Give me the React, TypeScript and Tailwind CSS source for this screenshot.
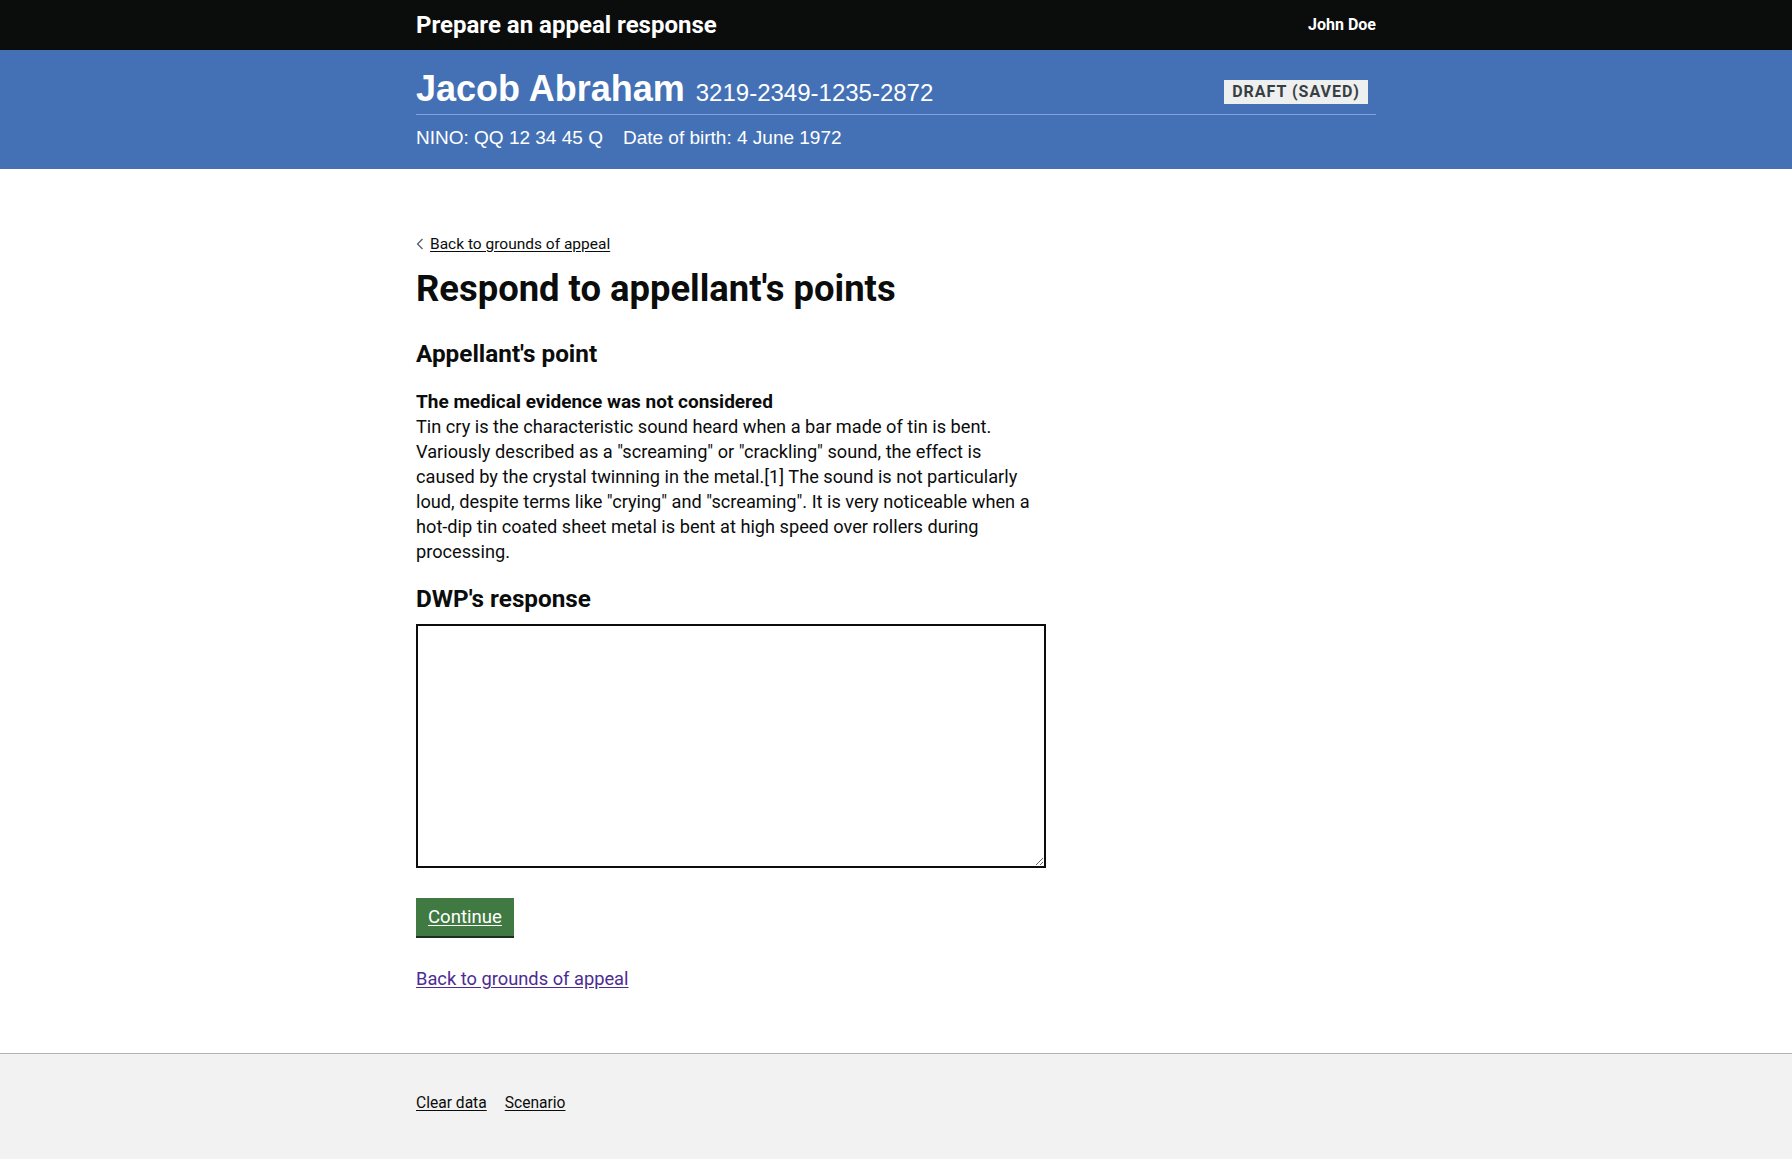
import React from "react";

const body = "font-['Roboto',sans-serif]";
const arial = "font-['Liberation_Sans',Arial,sans-serif]";

function Chevron() {
  return (
    <svg width="8" height="12" viewBox="0 0 8 12" className="shrink-0">
      <polyline points="6.5,1 1.5,6 6.5,11" fill="none" stroke="#505a5f" strokeWidth="1.2" />
    </svg>
  );
}

export default function App() {
  return (
    <div className={`min-h-screen flex flex-col bg-white text-[#0b0c0c] ${body}`}>
      {/* top bar */}
      <header className="bg-[#0b0c0c] text-white">
        <div className="w-[960px] mx-auto h-[50px] flex items-center justify-between">
          <div className="text-[24px] leading-[30px] font-bold">Prepare an appeal response</div>
          <div className="text-[16px] leading-[20px] font-bold">John Doe</div>
        </div>
      </header>

      {/* claimant band */}
      <section className={`bg-[#4471b5] text-white ${arial}`}>
        <div className="w-[960px] mx-auto pt-[18px] pb-[19px]">
          <div className="flex justify-between items-start border-b border-[#7fa1df] pb-[5px]">
            <div className="flex items-baseline gap-[11px]">
              <span className="text-[36px] leading-[41px] font-bold">Jacob Abraham</span>
              <span className="text-[24px] leading-[30px]">3219-2349-1235-2872</span>
            </div>
            <span
              className={`mt-[12px] mr-[8px] bg-[#eeefef] text-[#383f43] text-[16px] leading-[24px] font-bold tracking-[1px] px-[8px] ${body}`}
            >
              DRAFT (SAVED)
            </span>
          </div>
          <div className="mt-[10px] flex gap-[20px] text-[19px] leading-[25px]">
            <span>NINO: QQ 12 34 45 Q</span>
            <span>Date of birth: 4 June 1972</span>
          </div>
        </div>
      </section>

      {/* main */}
      <main className="flex-1">
        <div className="w-[960px] mx-auto pt-[65px] pb-[62px]">
          <div className="w-[630px] flex flex-col">
            <a href="#" className="flex items-center gap-[6px] text-[15.5px] leading-[20px] text-[#0b0c0c] underline underline-offset-2 self-start">
              <Chevron />
              <span>Back to grounds of appeal</span>
            </a>
            <h1 className="mt-[15px] text-[36.4px] leading-[40px] font-bold">Respond to appellant's points</h1>
            <h2 className="mt-[30px] text-[24.3px] leading-[30px] font-bold">Appellant's point</h2>
            <div className="mt-[20px] text-[18.2px] leading-[25px]">
              <p className="font-bold text-[19px]">The medical evidence was not considered</p>
              <p>
                Tin cry is the characteristic sound heard when a bar made of tin is bent.
                <br />
                Variously described as a "screaming" or "crackling" sound, the effect is
                <br />
                caused by the crystal twinning in the metal.[1] The sound is not particularly
                <br />
                loud, despite terms like "crying" and "screaming". It is very noticeable when a
                <br />
                hot-dip tin coated sheet metal is bent at high speed over rollers during
                <br />
                processing.
              </p>
            </div>
            <h2 className="mt-[20px] text-[24.3px] leading-[30px] font-bold">DWP's response</h2>
            <textarea
              aria-label="DWP's response"
              className="mt-[10px] w-[630px] h-[244px] border-2 border-[#0b0c0c] p-[5px] text-[18px] outline-none resize-y"
            />
            <button
              type="button"
              className="mt-[30px] self-start bg-[#407a42] text-white text-[18.6px] leading-[38px] h-[38px] px-[12px] shadow-[0_2px_0_#1c2e1d] underline underline-offset-2"
            >
              Continue
            </button>
            <a href="#" className="mt-[30px] self-start text-[18.3px] leading-[25px] text-[#4c2c92] underline underline-offset-2">
              Back to grounds of appeal
            </a>
          </div>
        </div>
      </main>

      {/* footer */}
      <footer className="bg-[#f2f2f2] border-t border-[#b1b4b6]">
        <div className="w-[960px] mx-auto pt-[39px] pb-[60px] flex gap-[18px] text-[15.6px] leading-[20px]">
          <a href="#" className="underline underline-offset-2 text-[#0b0c0c]">Clear data</a>
          <a href="#" className="underline underline-offset-2 text-[#0b0c0c]">Scenario</a>
        </div>
      </footer>
    </div>
  );
}
